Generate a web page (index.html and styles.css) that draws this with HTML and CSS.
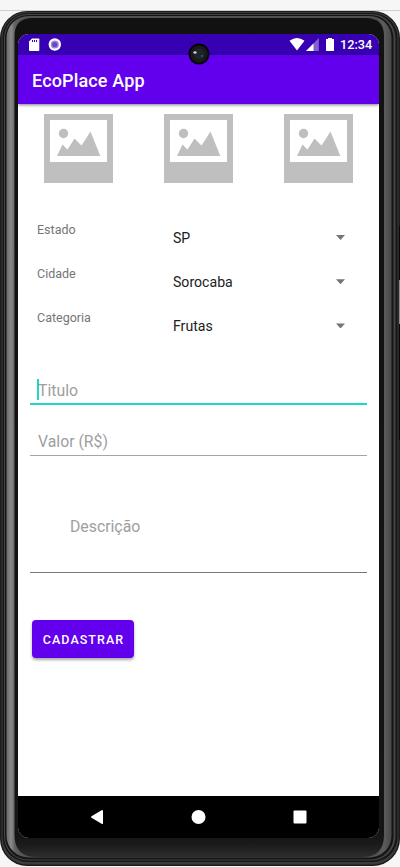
FILE: index.html
```html
<!DOCTYPE html>
<html lang="pt-BR">
<head>
<meta charset="utf-8">
<title>EcoPlace App</title>
<link rel="stylesheet" href="styles.css">
</head>
<body>
<svg width="0" height="0" class="defs" aria-hidden="true">
  <symbol id="photo" viewBox="0 0 69 69">
    <path fill="#bfbfbf" d="M0 0h69v69H0z"/>
    <path fill="#fff" d="M6 6h57v42H6z"/>
    <circle cx="19.5" cy="19.5" r="4.7" fill="#bfbfbf"/>
    <path fill="#bfbfbf" d="M13 42l5.5-11.5 5 5L30.500 24.500l7 7L46.500 17.500 56.300 42z"/>
  </symbol>
</svg>
<div class="device">
  <svg class="frame" viewBox="0 0 400 867" aria-hidden="true">
    <defs>
      <linearGradient id="metal" x1="0" x2="1" y1="0" y2="0">
        <stop offset="0" stop-color="#6a6a6a"/><stop offset=".012" stop-color="#8a8a8a"/><stop offset=".022" stop-color="#606060"/><stop offset=".05" stop-color="#505050"/>
        <stop offset=".96" stop-color="#505050"/><stop offset=".98" stop-color="#5c5c5c"/><stop offset="1" stop-color="#484848"/>
      </linearGradient>
      <linearGradient id="bezel" x1="0" x2="0" y1="0" y2="1">
        <stop offset="0" stop-color="#111"/><stop offset=".975" stop-color="#151515"/><stop offset=".985" stop-color="#1b1b1b"/><stop offset="1" stop-color="#2d2d2d"/>
      </linearGradient>
    </defs>
    <path d="M0 10.500H400" stroke="#cfcfcf"/>
    <rect x="0" y="11" width="400" height="855" rx="27" fill="#1b1b1b"/>
    <rect x="1.500" y="12" width="397" height="852.500" rx="25.500" fill="#3c3c3c"/>
    <rect x="2.500" y="13" width="395" height="849" rx="25" fill="#161616"/>
    <rect x="4" y="14" width="391.500" height="846.500" rx="24" fill="#444"/>
    <rect x="5" y="15" width="388.500" height="844.500" rx="23" fill="#151515"/>
    <rect x="6.500" y="16" width="385" height="841.500" rx="22" fill="url(#metal)"/>
    <path d="M14.500 36q0-18 18-18H366q18 0 18 18V835q0 22-22 22H36.500q-22 0-22-22z" fill="url(#bezel)"/>
    <path d="M399.500 226V280M399.500 324V440" stroke="#080808"/>
    <path d="M399.500 280V324" stroke="#8a8a8a"/>
  </svg>
  <main class="screen">
    <header class="status">
      <svg class="status-left" width="44" height="21" viewBox="0 0 44 21">
        <path fill="#fff" d="M15 4.500h6.500q.8 0 .8.800v10.900q0 .8-.8.800h-8.700q-.8 0-.8-.8V7.500z"/>
        <path stroke="#3700b3" stroke-width="1" d="M15.500 6v2M17.500 6v2M19.500 6v2"/>
        <circle cx="37.800" cy="10.500" r="6.200" fill="#fff"/>
        <circle cx="37.800" cy="10.500" r="3.300" fill="#6a45c7" stroke="#9d85dc" stroke-width="1.400"/>
      </svg>
      <svg class="status-icons" width="50" height="21" viewBox="0 0 50 21">
        <path fill="#fff" d="M1.500 6.800Q9 1.300 16.500 6.800L9 16.500z"/>
        <path fill="#8460d0" d="M30.800 4v13H18z"/>
        <path fill="#fff" d="M25.500 9.400V17H18z"/>
        <path fill="#fff" d="M40 4h4v1h2v12h-8V5h2z"/>
      </svg>
      <span class="clock">12:34</span>
    </header>
    <div class="toolbar">EcoPlace App</div>
    <section class="content">
      <div class="photos">
        <svg><use href="#photo"/></svg><svg><use href="#photo"/></svg><svg><use href="#photo"/></svg>
      </div>
      <div class="options">
        <div class="option"><span class="label">Estado</span><span class="value">SP</span><i class="arrow"></i></div>
        <div class="option"><span class="label">Cidade</span><span class="value">Sorocaba</span><i class="arrow"></i></div>
        <div class="option"><span class="label">Categoria</span><span class="value">Frutas</span><i class="arrow"></i></div>
      </div>
      <div class="field field-title"><i class="caret"></i><span>Titulo</span></div>
      <div class="field field-price"><span>Valor (R$)</span></div>
      <div class="field field-description"><span>Descrição</span></div>
      <button class="submit">CADASTRAR</button>
    </section>
    <nav class="navbar">
      <svg width="361" height="42" viewBox="0 0 361 42" fill="#fff">
        <path d="M73.500 20.300L84 14q1 0 1 1v12.500q0 .8-1 .5L73.500 21.700q-1-.7 0-1.400z"/>
        <circle cx="180.500" cy="21" r="7"/>
        <rect x="275.500" y="14.500" width="13" height="13" rx="1"/>
      </svg>
    </nav>
  </main>
  <svg class="camera" width="22" height="22" viewBox="0 0 22 22">
    <circle cx="11" cy="11" r="10.500" fill="#030303"/>
    <circle cx="11" cy="11" r="8.800" fill="#17191b"/>
    <circle cx="11" cy="11" r="5.500" fill="#20232a"/>
    <ellipse cx="7" cy="9.500" rx="1.700" ry="1.200" fill="#c9ced0"/>
    <circle cx="14" cy="13" r=".7" fill="#4b91d0"/>
  </svg>
</div>
</body>
</html>
```
FILE: styles.css
```css
* { box-sizing: border-box; }
body {
  margin: 0;
  background: #f6f6f6;
  font-family: Roboto, "Liberation Sans", sans-serif;
  overflow: hidden;
}
.defs { display: block; }
.device { display: grid; width: 400px; height: 867px; }
.device > * { grid-area: 1 / 1; }
.frame { width: 400px; height: 867px; }
.screen {
  display: flex;
  flex-direction: column;
  width: 361px;
  height: 804px;
  margin: 34px 0 0 18px;
  border-radius: 11px;
  background: #fff;
  overflow: hidden;
}
.status {
  display: flex;
  flex: 0 0 21px;
  min-height: 0;
  height: 21px;
  background: #3700b3;
  color: #fff;
}
.status-left { margin-left: -1px; }
.status-icons { margin-left: 227px; }
.clock {
  height: 21px;
  margin-left: 2px;
  font-size: 12.7px;
  font-weight: 500;
  line-height: 22px;
}
.toolbar {
  flex: 0 0 49px;
  min-height: 0;
  height: 49px;
  padding-left: 14px;
  background: #6200ee;
  box-shadow: 0 1px 3px rgba(0, 0, 0, .5);
  color: #fff;
  font-size: 18px;
  font-weight: 500;
  letter-spacing: .15px;
  line-height: 51px;
}
.content { flex: 1; display: flex; flex-direction: column; }
.photos {
  display: flex;
  justify-content: space-between;
  padding: 10px 26px 0;
}
.photos svg { width: 69px; height: 69px; }
.options { margin-top: 33px; }
.option {
  display: grid;
  grid-template-columns: 136px 163px 9px;
  height: 44.2px;
  padding-left: 19px;
}
.label {
  padding-top: 5px;
  color: #757575;
  font-size: 12.5px;
  line-height: 18px;
}
.value {
  padding-top: 12px;
  color: #212121;
  font-size: 14.1px;
  line-height: 20px;
}
.arrow {
  height: 5px;
  margin-top: 19px;
  background: #757575;
  clip-path: polygon(0 0, 100% 0, 50% 100%);
}
.field {
  display: flex;
  width: 337px;
  margin-left: 12px;
  padding-left: 8px;
  border-bottom: 1px solid #a5a5a5;
  color: #9e9e9e;
  font-size: 15.8px;
  line-height: 22px;
}
.field-title {
  height: 31px;
  margin-top: 25.4px;
  padding-top: 6px;
  border-bottom: 2px solid #1bd9c9;
}
.caret {
  width: 2px;
  height: 21px;
  margin: -1px -1px 0 -1px;
  background: #1bd9c9;
}
.field-price { height: 36px; margin-top: 15px; padding-top: 11px; }
.field-description {
  height: 74px;
  margin-top: 43px;
  padding: 17px 0 0 40px;
  border-color: #777;
}
.submit {
  width: 102px;
  height: 38px;
  margin: 47px 0 0 14px;
  padding: 2px 0 0 1px;
  border: 0;
  border-radius: 4px;
  background: #6200ee;
  box-shadow: 0 2px 3px rgba(0, 0, 0, .35);
  color: #fff;
  font: 500 12.5px Roboto, sans-serif;
  letter-spacing: 1.05px;
}
.navbar { flex: 0 0 42px; background: #000; }
.navbar svg { display: block; }
.camera { margin: 43px 0 0 187.5px; }
```
